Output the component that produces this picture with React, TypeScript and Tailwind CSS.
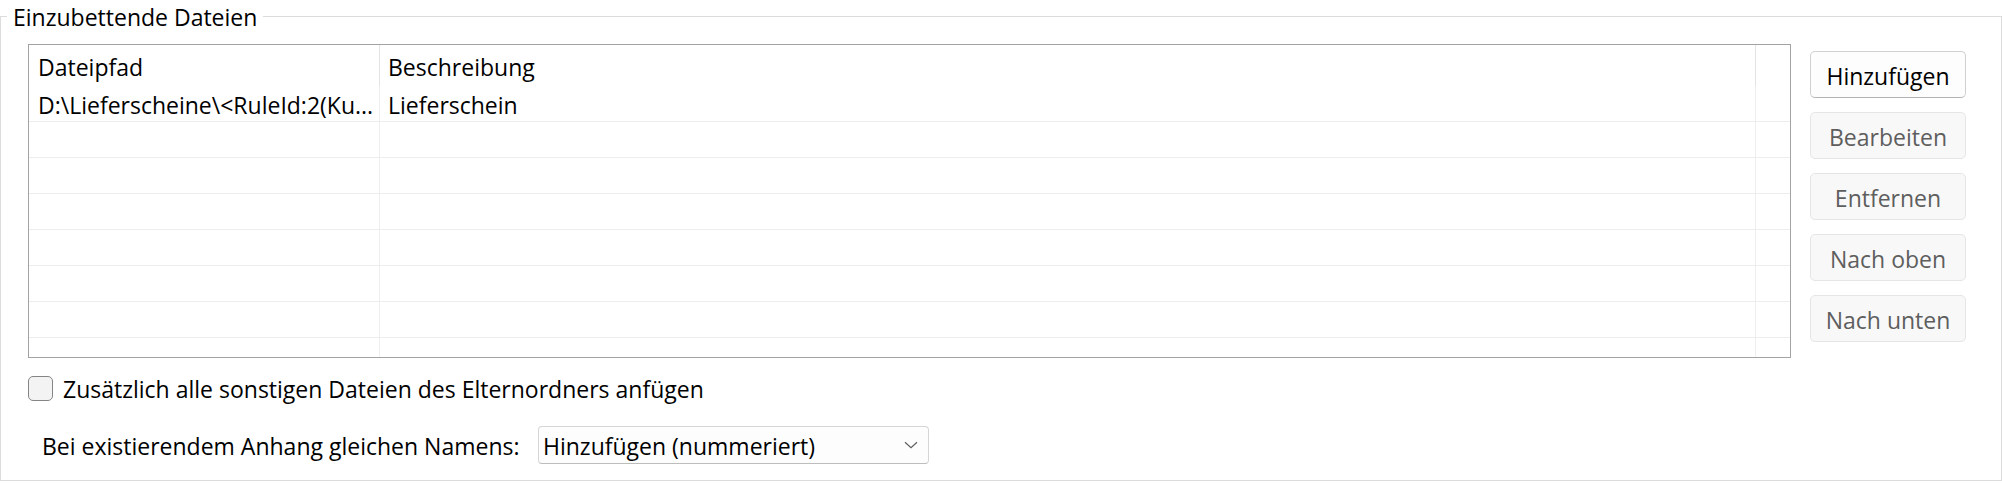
import React from "react";

function Btn({ label, enabled }: { label: string; enabled?: boolean }) {
  return enabled ? (
    <button className="h-[47px] w-full rounded-[5px] border border-[#d0d0d0] border-b-[#b3b3b3] bg-[#fdfdfd] pt-[2px] text-[23px] leading-[32px] text-black">
      {label}
    </button>
  ) : (
    <button className="h-[47px] w-full rounded-[5px] border border-[#e5e5e5] bg-[#f8f8f8] pt-[2px] text-[23px] leading-[32px] text-[#5e5e5e]">
      {label}
    </button>
  );
}

export default function App() {
  const rows = [
    { a: "D:\\Lieferscheine\\<RuleId:2(Ku...", b: "Lieferschein" },
    { a: "", b: "" },
    { a: "", b: "" },
    { a: "", b: "" },
    { a: "", b: "" },
    { a: "", b: "" },
    { a: "", b: "" },
    { a: "", b: "" },
  ];
  return (
    <div className="w-[2002px] h-[483px] bg-white text-black font-['Open_Sans',sans-serif] text-[23px] leading-[32px]">
      <fieldset className="m-0 w-[2002px] border border-[#dcdcdc] p-0">
        <legend className="ml-[6px] h-[32px] px-[6px] pt-[2px] text-[23px] leading-[30px]">Einzubettende Dateien</legend>
        <div className="pl-[27px] pr-[35px] pt-[12px] pb-[16px]">
          <div className="flex items-start gap-[19px]">
            <div className="h-[314px] flex-1 overflow-hidden border border-[#a3a3a3] bg-white">
              <div className="grid h-[41px] grid-cols-[351px_1376px_1fr]">
                <div className="flex items-center border-r border-[#e4e4e4] pl-[9px] pt-[2px]">Dateipfad</div>
                <div className="flex items-center border-r border-[#e4e4e4] pl-[8px] pt-[2px]">Beschreibung</div>
                <div />
              </div>
              {rows.map((r, i) => (
                <div key={i} className="grid h-[36px] grid-cols-[351px_1376px_1fr] border-b border-[#ededed]">
                  <div className="flex items-center overflow-hidden whitespace-nowrap border-r border-[#efefef] pl-[9px] pt-[2px]">{r.a}</div>
                  <div className="flex items-center border-r border-[#efefef] pl-[8px] pt-[2px]">{r.b}</div>
                  <div />
                </div>
              ))}
            </div>
            <div className="mt-[7px] flex w-[156px] flex-col gap-[14px]">
              <Btn label="Hinzufügen" enabled />
              <Btn label="Bearbeiten" />
              <Btn label="Entfernen" />
              <Btn label="Nach oben" />
              <Btn label="Nach unten" />
            </div>
          </div>
          <div className="mt-[14px] flex h-[32px] items-center">
            <div className="h-[25px] w-[25px] rounded-[5px] border border-[#858585] bg-[#f3f3f3]" />
            <span className="ml-[10px] pt-[2px]">Zusätzlich alle sonstigen Dateien des Elternordners anfügen</span>
          </div>
          <div className="mt-[22px] flex h-[38px] items-center pl-[14px]">
            <span className="w-[496px] pt-[2px]">Bei existierendem Anhang gleichen Namens:</span>
            <div className="flex h-[38px] w-[391px] items-center justify-between rounded-[4px] border border-[#d6d6d6] border-b-[#bdbdbd] bg-[#fdfdfd] pl-[4px] pr-[10px]">
              <span className="pt-[2px]">Hinzufügen (nummeriert)</span>
              <svg width="14" height="8" viewBox="0 0 14 8" fill="none">
                <path d="M1 1.2 L7 6.8 L13 1.2" stroke="#5f5f5f" strokeWidth="1.2" />
              </svg>
            </div>
          </div>
        </div>
      </fieldset>
    </div>
  );
}
